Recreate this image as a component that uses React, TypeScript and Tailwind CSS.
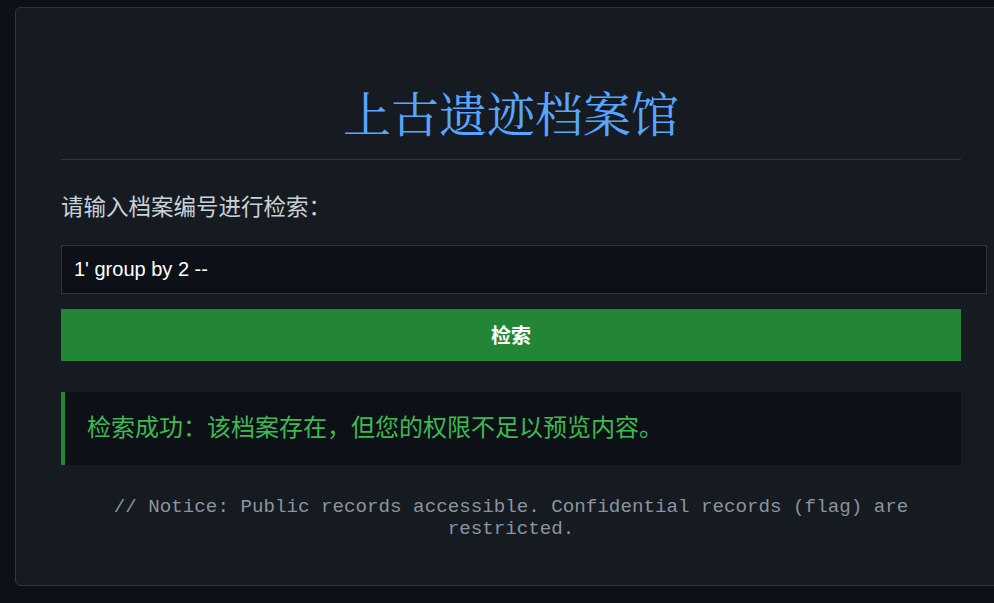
import { useState } from "react";

export default function App() {
  const [query, setQuery] = useState("1' group by 2 --");

  return (
    <main className="min-h-screen w-full overflow-hidden bg-[#0d1117]">
      <div className="ml-[15px] mt-[7px] w-[992px] rounded-[6px] border border-[#30363d] bg-[#161b22] px-[45px] pb-[45px] pt-[72px]">
        {/* Title */}
        <h1 className="w-[900px] border-b border-[#30363d] pb-[15px] text-center font-['Noto_Serif_CJK_SC','Noto_Sans_CJK_SC',serif] text-[48px] leading-[64px] font-normal text-[#58a6ff]">
          上古遗迹档案馆
        </h1>

        {/* Search form */}
        <form className="flex flex-col" onSubmit={(e) => e.preventDefault()}>
          <label className="mt-[30px] font-['Noto_Sans_CJK_SC','Noto_Sans',sans-serif] text-[22.5px] leading-[30px] text-[#c9d1d9]">
            请输入档案编号进行检索：
          </label>

          <input
            value={query}
            onChange={(e) => setQuery(e.target.value)}
            className="mt-[25px] h-[49px] w-[926px] border border-[#30363d] bg-[#0d1117] px-[12px] font-['Liberation_Sans',Arial,sans-serif] text-[20px] text-white outline-none"
          />

          <button
            type="submit"
            className="mt-[15px] h-[52px] w-[900px] bg-[#238636] font-['Noto_Sans_CJK_SC','Noto_Sans',sans-serif] text-[20px] font-semibold text-white"
          >
            检索
          </button>
        </form>

        {/* Result */}
        <div className="mt-[31px] flex h-[73px] w-[900px] items-center border-l-4 border-[#238636] bg-[#0d1117] pb-[5px] pl-[22px]">
          <p className="font-['Noto_Sans_CJK_SC','Noto_Sans',sans-serif] text-[24px] leading-[30px] text-[#3fb950]">
            检索成功：该档案存在，但您的权限不足以预览内容。
          </p>
        </div>

        {/* Notice */}
        <p className="mt-[31px] w-[900px] text-center font-['Liberation_Mono','Courier_New',monospace] text-[19.2px] leading-[22px] text-[#8b949e]">
          // Notice: Public records accessible. Confidential records (flag) are restricted.
        </p>
      </div>
    </main>
  );
}
